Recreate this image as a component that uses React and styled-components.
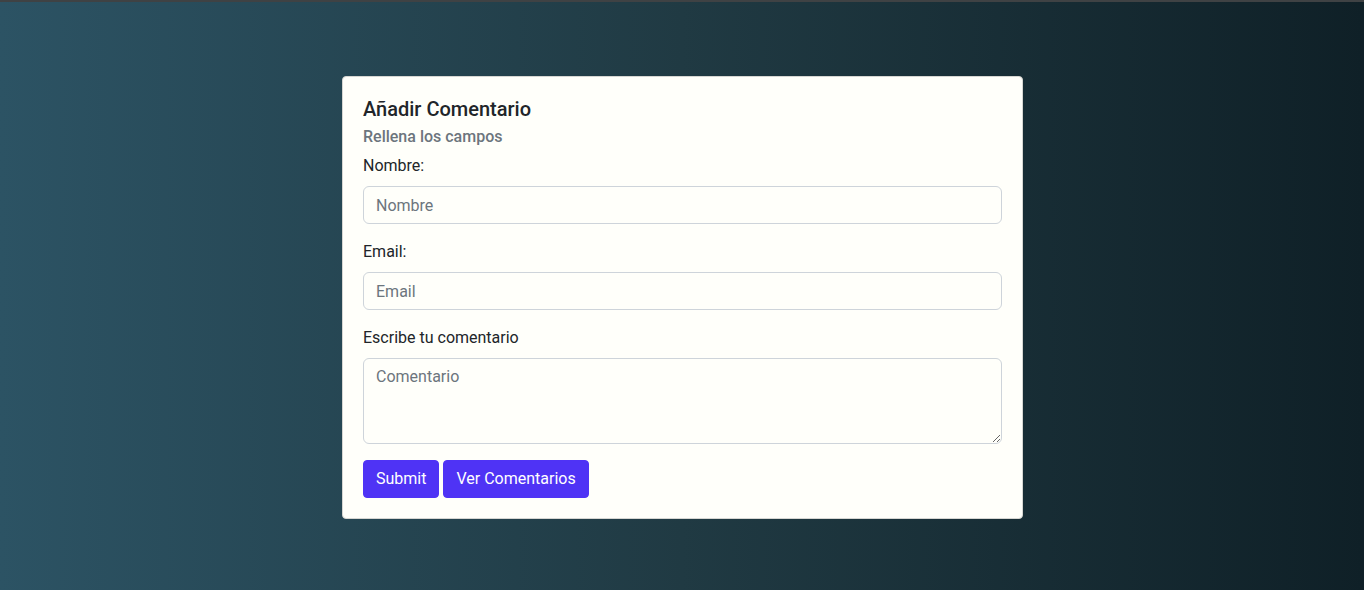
import React from "react";
import styled, { createGlobalStyle } from "styled-components";

const Global = createGlobalStyle`
  html, body { margin: 0; padding: 0; }
  body {
    font-family: Roboto, "Liberation Sans", sans-serif;
    font-size: 16px;
    line-height: 1.5;
    color: #212529;
  }
  * { box-sizing: border-box; }
`;

const Page = styled.div`
  min-height: 590px;
  border-top: 2px solid #3f4244;
  background: linear-gradient(to left, #0f2027, #203a43, #2c5364);
  display: flex;
  justify-content: center;
  padding-top: 74px;
  padding-left: 1px;
`;

const Card = styled.div`
  width: 681px;
  align-self: flex-start;
  background: #fffffa;
  border: 1px solid #d6d6d2;
  border-radius: 4px;
  padding: 20px;
`;

const Title = styled.h5`
  margin: 0 0 8px;
  font-size: 20px;
  font-weight: 500;
  line-height: 1.2;
  color: #212529;
`;

const Subtitle = styled.h6`
  margin: -2px 0 8px;
  font-size: 16px;
  font-weight: 500;
  line-height: 1.2;
  color: #6c757d;
`;

const Field = styled.div`
  margin-bottom: 16px;
`;

const Label = styled.label`
  display: block;
  margin-bottom: 8px;
`;

const Input = styled.input`
  display: block;
  width: 100%;
  height: 38px;
  padding: 6px 12px;
  font: inherit;
  color: #212529;
  background: #fffffa;
  border: 1px solid #ced4da;
  border-radius: 6px;
  &::placeholder { color: #6c757d; }
  &:focus { outline: none; }
`;

const TextArea = styled.textarea`
  display: block;
  width: 100%;
  height: 86px;
  padding: 6px 12px;
  font: inherit;
  color: #212529;
  background: #fffffa;
  border: 1px solid #ced4da;
  border-radius: 6px;
  resize: vertical;
  &::placeholder { color: #6c757d; }
  &:focus { outline: none; }
`;

const Actions = styled.div`
  display: flex;
  gap: 4px;
`;

const Button = styled.button`
  height: 38px;
  padding: 6px 12px;
  font: inherit;
  color: #fff;
  background: #4f33f5;
  border: 1px solid #4f33f5;
  border-radius: 4px;
  cursor: pointer;
`;

export default function App() {
  return (
    <>
      <Global />
      <Page>
        <Card>
          <Title>Añadir Comentario</Title>
          <Subtitle>Rellena los campos</Subtitle>
          <Field>
            <Label>Nombre:</Label>
            <Input placeholder="Nombre" />
          </Field>
          <Field>
            <Label>Email:</Label>
            <Input placeholder="Email" />
          </Field>
          <Field>
            <Label>Escribe tu comentario</Label>
            <TextArea placeholder="Comentario" rows={3} />
          </Field>
          <Actions>
            <Button>Submit</Button>
            <Button>Ver Comentarios</Button>
          </Actions>
        </Card>
      </Page>
    </>
  );
}
